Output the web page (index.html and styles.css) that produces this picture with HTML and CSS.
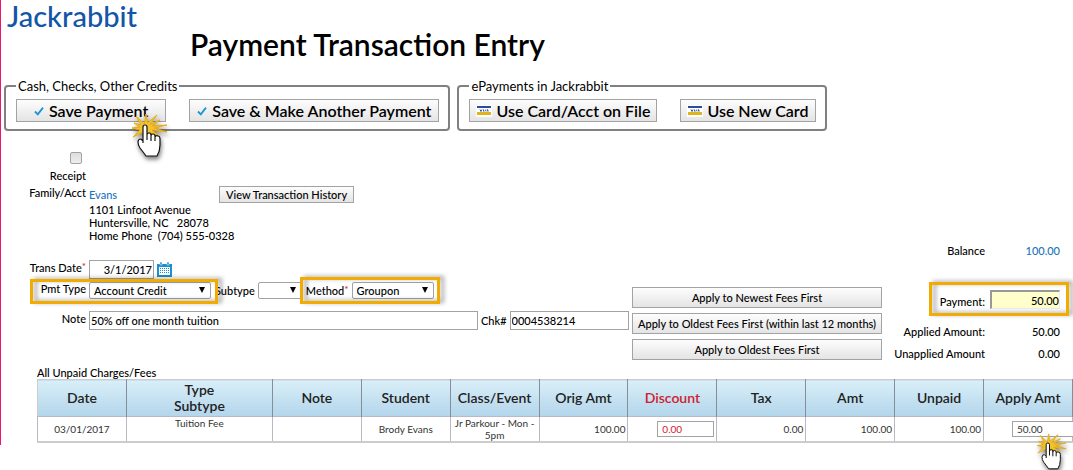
FILE: index.html
```html
<!DOCTYPE html>
<html lang="en">
<head>
  <meta charset="UTF-8" />
  <meta name="viewport" content="width=device-width, initial-scale=1.0"/>
  <title>Payment Transaction Entry</title>
  <link rel="stylesheet" href="styles.css">
</head>
<body>

<!-- shared icons -->
<svg class="sprite" aria-hidden="true">
  <symbol id="check" viewBox="0 0 10 10">
    <path d="M1 5.5 L3.8 8.4 L9 1.6" fill="none" stroke="#1b95d6" stroke-width="1.8"/>
  </symbol>
  <symbol id="visa" viewBox="0 0 16 12">
    <rect width="16" height="12" fill="#fff"/>
    <rect x="1" y="1" width="14" height="2" fill="#2b4c9b"/>
    <path d="M4 4.5l1 2 1-2M7.5 4.5v2M9.8 4.5l-1 2M11 6.5l.6-2 .6 2" fill="none" stroke="#3d59a5" stroke-width="1"/>
    <rect x="1" y="7" width="14" height="3" fill="#e3b31b"/>
  </symbol>
  <symbol id="calendar" viewBox="0 0 15 15">
    <path d="M0 2h15v13H0z" fill="#1a8fd2"/>
    <path d="M3 0h2v3H3zM10 0h2v3h-2z" fill="#1a8fd2" stroke="#fff" stroke-width=".5"/>
    <path d="M2 5h11v8H2z" fill="#fff"/>
    <path d="M3 6h1v1H3zM5 6h1v1H5zM7 6h1v1H7zM9 6h1v1H9zM11 6h1v1h-1zM3 8h1v1H3zM5 8h1v1H5zM7 8h1v1H7zM9 8h1v1H9zM11 8h1v1h-1zM3 10h1v1H3zM5 10h1v1H5zM7 10h1v1H7zM9 10h1v1H9zM11 10h1v1h-1z" fill="#1a8fd2"/>
  </symbol>
  <symbol id="pointer" viewBox="0 0 36 48">
    <path d="M12.5 11 L14 1 L15.5 10 L25 2 L18 11.5 L28 7 L20 13 L35 12 L22 15 L35 19 L20 17 L28 24 L17 19 L12 27 L11 19 L1 24 L8 17 L0 15 L8 14 L2 10 L9 12 L4 3 Z" fill="#f3c232" stroke="#e6ad10" stroke-width="1"/>
    <path d="M11 28 V14 Q11 12 13 12 Q15 12 15 14 V22 Q15 20 17 20 Q19 20 19 22 V23 Q19 21 21 21 Q23 21 23 23 V24 Q24 22 26 23 Q28 23 28 26 V32 Q28 38 25 43 H14 Q12 40 8 35 Q6 32 6 29 Q6 26 9 26 Z" fill="#fff"/>
    <path d="M11 30 V14 Q11 12 13 12 Q15 12 15 14 V27 M15 22 Q15 20 17 20 Q19 20 19 22 V28 M19 23 Q19 21 21 21 Q23 21 23 23 V28 M23 24 Q24 22 26 23 Q28 23 28 26 V32 Q28 38 25 43 H14 Q12 40 8 35 Q6 32 6 29 Q6 26 9 26 L11 28" fill="none" stroke="#111" stroke-width="1.2"/>
  </symbol>
</svg>

<div class="page">
  <header class="header">
    <div class="logo">Jackrabbit</div>
    <h1>Payment Transaction Entry</h1>
  </header>

  <form>
    <div class="actions">
      <fieldset>
        <legend>Cash, Checks, Other Credits</legend>
        <div class="action-row">
          <div class="pointed">
            <button type="button" class="btn btn-big btn-save"><svg class="check"><use href="#check"/></svg>Save Payment</button>
            <svg class="pointer pointer-save" aria-hidden="true"><use href="#pointer"/></svg>
          </div>
          <button type="button" class="btn btn-big"><svg class="check"><use href="#check"/></svg>Save &amp; Make Another Payment</button>
        </div>
      </fieldset>
      <fieldset>
        <legend>ePayments in Jackrabbit</legend>
        <div class="action-row">
          <button type="button" class="btn btn-big btn-card"><svg class="visa"><use href="#visa"/></svg>Use Card/Acct on File</button>
          <button type="button" class="btn btn-big btn-card"><svg class="visa"><use href="#visa"/></svg>Use New Card</button>
        </div>
      </fieldset>
    </div>

    <div class="entry">
      <div class="details">
        <div class="receipt">
          <input type="checkbox" id="receipt" class="checkbox" />
          <label for="receipt">Receipt</label>
        </div>

        <div class="row row-family">
          <span class="label">Family/Acct</span>
          <a href="#" class="family">Evans</a>
          <button type="button" class="btn">View Transaction History</button>
        </div>
        <address>
          1101 Linfoot Avenue<br>
          Huntersville, NC &nbsp; 28078<br>
          Home Phone &nbsp;(704) 555-0328
        </address>

        <div class="row row-date">
          <label class="label" for="transDate">Trans Date<sup>*</sup></label>
          <input type="text" id="transDate" class="box date" value="3/1/2017" />
          <svg class="calendar" aria-hidden="true"><use href="#calendar"/></svg>
        </div>

        <div class="row row-type">
          <div class="group highlight">
            <label class="label" for="pmtType">Pmt Type</label>
            <span class="select type"><select id="pmtType"><option>Account Credit</option></select></span>
          </div>
          <div class="group">
            <label for="subtype">Subtype</label>
            <span class="select subtype"><select id="subtype"><option></option></select></span>
          </div>
          <div class="group highlight method-group">
            <label for="method">Method<sup>*</sup></label>
            <span class="select method"><select id="method"><option>Groupon</option></select></span>
          </div>
        </div>

        <div class="row row-note">
          <label class="label" for="note">Note</label>
          <input type="text" id="note" class="box note" value="50% off one month tuition" />
          <label for="chk">Chk#</label>
          <input type="text" id="chk" class="box chk" value="0004538214" />
        </div>
      </div>

      <div class="apply">
        <button type="button" class="btn">Apply to Newest Fees First</button>
        <button type="button" class="btn">Apply to Oldest Fees First (within last 12 months)</button>
        <button type="button" class="btn">Apply to Oldest Fees First</button>
      </div>

      <div class="totals">
        <div class="total balance"><span>Balance</span><a href="#">100.00</a></div>
        <div class="total highlight payment">
          <label for="payment">Payment:</label>
          <input type="text" id="payment" value="50.00" />
        </div>
        <div class="total"><span>Applied Amount:</span><span>50.00</span></div>
        <div class="total"><span>Unapplied Amount</span><span>0.00</span></div>
      </div>
    </div>

    <h2>All Unpaid Charges/Fees</h2>
    <table>
      <thead>
        <tr>
          <th>Date</th>
          <th class="col-type">Type<br>Subtype</th>
          <th>Note</th>
          <th>Student</th>
          <th>Class/Event</th>
          <th>Orig Amt</th>
          <th class="red">Discount</th>
          <th>Tax</th>
          <th>Amt</th>
          <th>Unpaid</th>
          <th>Apply Amt</th>
        </tr>
      </thead>
      <tbody>
        <tr>
          <td>03/01/2017</td>
          <td class="top">Tuition Fee</td>
          <td></td>
          <td>Brody Evans</td>
          <td>Jr Parkour - Mon - 5pm</td>
          <td class="num">100.00</td>
          <td class="num"><input type="text" class="box cell red" value="0.00" aria-label="Discount" /></td>
          <td class="num">0.00</td>
          <td class="num">100.00</td>
          <td class="num">100.00</td>
          <td class="apply-cell">
            <div class="pointed">
              <input type="text" class="box cell cell-apply" value="50.00" aria-label="Apply Amt" />
              <svg class="pointer pointer-apply" aria-hidden="true"><use href="#pointer"/></svg>
            </div>
          </td>
        </tr>
      </tbody>
    </table>
  </form>
</div>

</body>
</html>
```
FILE: styles.css
```css
:root {
  --blue: #1b75bc;
  --logo: #1256a8;
  --red: #d0202e;
  --orange: #f2ab00;
  --line: #a3a3a3;
}

* {
  box-sizing: border-box;
}

body {
  margin: 0;
  min-height: 100vh;
  font-family: Lato, "Open Sans", sans-serif;
  font-size: 11px;
  font-weight: 500;
  line-height: 13px;
  color: #000;
  background: #fff;
  overflow: hidden;
}

input,
select,
button {
  font: inherit;
  color: inherit;
  margin: 0;
}

a {
  color: var(--blue);
  text-decoration: none;
}

sup {
  color: var(--red);
  font-size: 10px;
  line-height: 0;
  vertical-align: 2px;
}

.sprite {
  display: none;
}

.page {
  border-left: 1px solid #f0146e;
  padding-bottom: 2px;
}

/* header */
.header {
  height: 78px;
}

.logo {
  padding-left: 6px;
  font-size: 29px;
  line-height: 32px;
  color: var(--logo);
}

h1 {
  margin: 0 0 0 189px;
  font-size: 30px;
  font-weight: 600;
  line-height: 24px;
}

/* top action buttons */
.actions {
  display: flex;
  gap: 7px;
  padding-left: 3px;
}

fieldset {
  margin: 0;
  padding: 5px 9px 7px 10px;
  border: 2px solid #808080;
  border-radius: 4px;
}

legend {
  padding: 0 2px;
  font-size: 13px;
  font-weight: 400;
  line-height: 16px;
}

.action-row {
  display: flex;
  gap: 23px;
}

.btn {
  display: flex;
  align-items: center;
  justify-content: center;
  height: 17px;
  padding: 0 6px;
  border: 1px solid var(--line);
  background: linear-gradient(#fdfdfd, #e4e4e4);
  white-space: nowrap;
}

.btn-big {
  height: 23px;
  gap: 5px;
  padding: 0 7px;
  font-size: 16px;
  font-weight: 600;
}

.btn-save {
  padding: 0 17px;
}

.btn-card {
  gap: 4px;
  padding: 0 6px;
}

.check {
  width: 10px;
  height: 10px;
}

.visa {
  width: 16px;
  height: 12px;
}

.pointed {
  position: relative;
}

.pointer {
  position: absolute;
  z-index: 2;
  filter: drop-shadow(1px 3px 2px rgba(0, 0, 0, 0.5));
  pointer-events: none;
}

.pointer-save {
  right: -2px;
  top: 14px;
  width: 36px;
  height: 48px;
}

.pointer-apply {
  left: 25px;
  top: 12px;
  width: 30px;
  height: 40px;
}

/* entry area */
.entry {
  display: grid;
  grid-template-columns: minmax(0, 631px) 250px 1fr;
  align-items: end;
}

.details {
  align-self: start;
  padding-bottom: 30px;
}

.receipt {
  display: flex;
  flex-direction: column;
  align-items: flex-end;
  gap: 5px;
  width: 85px;
  padding-top: 21px;
}

.checkbox {
  appearance: none;
  width: 12px;
  height: 12px;
  margin-right: 4px;
  border: 1px solid var(--line);
  border-radius: 2px;
  background: linear-gradient(#ddd, #eee);
}

.row {
  display: flex;
  align-items: center;
  gap: 3px;
}

.label {
  width: 85px;
  padding-bottom: 4px;
  text-align: right;
}

.row-family {
  padding-top: 4px;
}

.family {
  width: 127px;
}

address {
  padding-left: 88px;
  font-style: normal;
}

.row-date {
  padding-top: 18px;
}

.row-type {
  gap: 4px;
  padding-top: 3px;
}

.row-note {
  padding-top: 12px;
}

.group {
  display: flex;
  align-items: center;
  gap: 3px;
  position: relative;
}

.box {
  height: 19px;
  padding: 0 1px;
  border: 1px solid var(--line);
  background: #fff;
}

.date {
  width: 65px;
  text-align: right;
}

.calendar {
  width: 15px;
  height: 15px;
}

.note {
  width: 389px;
}

.chk {
  width: 119px;
}

.select {
  position: relative;
  display: block;
}

.select::after {
  content: "";
  position: absolute;
  right: 6px;
  top: 5px;
  border: 3px solid transparent;
  border-top: 6px solid #000;
  border-bottom: 0;
  pointer-events: none;
}

select {
  appearance: none;
  display: block;
  width: 100%;
  height: 17px;
  padding: 0 4px;
  border: 1px solid var(--line);
  border-radius: 2px;
  background: #fff;
}

.type {
  width: 122px;
}

.subtype {
  width: 44px;
}

.method {
  width: 82px;
}

/* orange callout drawn over a field */
.highlight {
  position: relative;
}

.highlight::after {
  content: "";
  position: absolute;
  z-index: 1;
  inset: -3px -7px -5px 29px;
  border: 3px solid var(--orange);
  filter: drop-shadow(4px -1px 2px rgba(0, 0, 0, 0.35));
  pointer-events: none;
}

.method-group::after {
  inset: -5px -6px -5px -6px;
}

.apply {
  display: grid;
  gap: 5px;
}

.apply .btn {
  height: 21px;
  padding: 0 2px;
}

.totals {
  padding-right: 13px;
}

.total {
  display: grid;
  grid-template-columns: 1fr 70px;
  gap: 5px;
  align-items: center;
  padding-bottom: 9px;
  text-align: right;
}

.total:last-child {
  padding-bottom: 0;
}

.balance {
  padding-bottom: 33px;
}

.payment {
  padding-bottom: 16px;
}

.payment label {
  padding-top: 4px;
}

.payment input {
  width: 70px;
  height: 19px;
  padding: 0;
  border: 1px solid #eee;
  border-top: 2px solid #999;
  border-left: 2px solid #999;
  background: #ffffcc;
  text-align: right;
}

.payment::after {
  inset: -8px -9px 9px auto;
  width: 134px;
}

/* fees table */
h2 {
  margin: 6px 0 0 36px;
  font-size: 11px;
  font-weight: 500;
  line-height: 13px;
}

table {
  width: calc(100% - 36px);
  margin-left: 36px;
  table-layout: fixed;
  border-collapse: collapse;
  border: 1px solid #ccc;
  border-bottom-width: 2px;
}

th {
  height: 37px;
  padding: 0;
  border-right: 1px solid #868d9b;
  background: linear-gradient(#d9eff8, #b3d5eb);
  font-size: 14px;
  font-weight: 600;
  line-height: 16px;
  color: #222;
}

.col-type {
  width: 146px;
}

td {
  height: 25px;
  padding: 0 2px;
  border: 1px solid #b9b9c6;
  font-size: 10px;
  font-weight: 400;
  line-height: 12px;
  text-align: center;
  color: #333;
}

td.top {
  vertical-align: top;
}

td.num {
  text-align: right;
}

.cell {
  display: block;
  width: 57px;
  height: 16px;
  margin-left: auto;
  padding: 0 4px;
}

.red {
  color: var(--red);
}

.apply-cell {
  padding-left: 28px;
}

.cell-apply {
  width: 100px;
  margin: 0;
}
```
